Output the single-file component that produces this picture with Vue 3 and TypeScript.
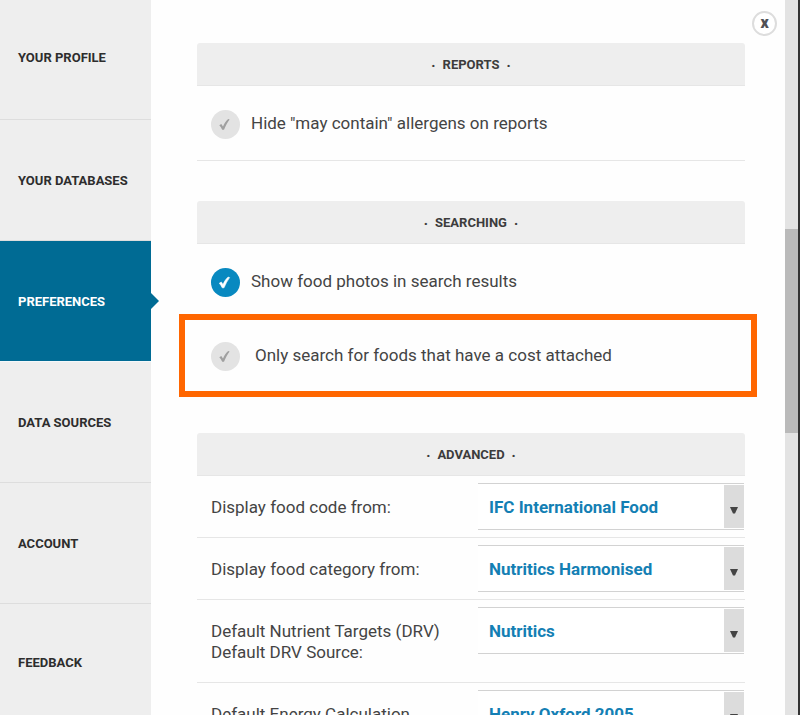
<script setup lang="ts">
import { reactive, ref } from 'vue'

interface ToggleOption {
  id: string
  label: string
  checked: boolean
  highlighted?: boolean
}

interface ToggleSection {
  title: string
  options: ToggleOption[]
}

interface SelectOption {
  id: string
  lines: string[]
  value: string
}

const navItems: string[] = [
  'Your profile',
  'Your databases',
  'Preferences',
  'Data sources',
  'Account',
  'Feedback',
]
const activeItem = ref('Preferences')

const sections = reactive<ToggleSection[]>([
  {
    title: 'Reports',
    options: [
      { id: 'hide-allergens', label: 'Hide "may contain" allergens on reports', checked: false },
    ],
  },
  {
    title: 'Searching',
    options: [
      { id: 'show-photos', label: 'Show food photos in search results', checked: true },
      {
        id: 'only-cost',
        label: 'Only search for foods that have a cost attached',
        checked: false,
        highlighted: true,
      },
    ],
  },
])

const selects = reactive<SelectOption[]>([
  { id: 'food-code', lines: ['Display food code from:'], value: 'IFC International Food' },
  { id: 'food-category', lines: ['Display food category from:'], value: 'Nutritics Harmonised' },
  {
    id: 'drv-source',
    lines: ['Default Nutrient Targets (DRV)', 'Default DRV Source:'],
    value: 'Nutritics',
  },
  { id: 'energy', lines: ['Default Energy Calculation'], value: 'Henry Oxford 2005' },
])
</script>

<template>
  <div class="page">
    <nav class="sidebar">
      <a
        v-for="item in navItems"
        :key="item"
        href="#"
        class="nav-item"
        :class="{ active: item === activeItem }"
        @click.prevent="activeItem = item"
      >{{ item }}</a>
    </nav>

    <main class="content">
      <button class="close" type="button">x</button>

      <section v-for="section in sections" :key="section.title" class="section">
        <h2 class="section-title"><span>·</span>{{ section.title }}<span>·</span></h2>
        <div class="options">
          <label
            v-for="option in section.options"
            :key="option.id"
            class="option"
            :class="{ highlighted: option.highlighted }"
            :for="option.id"
          >
            <span class="tick">
              <input :id="option.id" v-model="option.checked" type="checkbox" />
              <svg viewBox="0 0 29 29" aria-hidden="true">
                <path d="M8.3 15.2 L10.3 14 L12 16.6 C13.3 13.4 15 11 17.2 9 L18.6 9.6 C16.4 12.6 14.6 16 13 19.8 L11.2 19.8 C10.4 18 9.4 16.4 8.3 15.2 Z" />
              </svg>
            </span>
            <span class="option-text">{{ option.label }}</span>
          </label>
        </div>
      </section>

      <section class="section">
        <h2 class="section-title"><span>·</span>Advanced<span>·</span></h2>
        <div v-for="field in selects" :key="field.id" class="field">
          <label class="field-label" :for="field.id">
            <span v-for="line in field.lines" :key="line">{{ line }}</span>
          </label>
          <div class="select-box">
            <select :id="field.id" v-model="field.value">
              <option>{{ field.value }}</option>
            </select>
            <span class="arrow">
              <svg viewBox="0 0 8 8" aria-hidden="true"><path d="M0 1 H8 L5 7.5 H3 Z" /></svg>
            </span>
          </div>
        </div>
      </section>
    </main>

    <div class="scrollbar"><div class="thumb"></div></div>
    <div class="edge"></div>
  </div>
</template>

<style>
body {
  overflow: hidden;
}
</style>

<style scoped>
.page {
  display: grid;
  grid-template-columns: 151px 1fr 13px 2px;
  grid-template-rows: minmax(0, 1fr);
  height: 100vh;
  overflow: hidden;
  background: #fefefe;
  color: #444;
  font-family: Roboto, "Liberation Sans", sans-serif;
}

.sidebar {
  display: flex;
  flex-direction: column;
  background: #eee;
}

.nav-item {
  position: relative;
  display: flex;
  flex: none;
  align-items: center;
  box-sizing: border-box;
  height: 121px;
  padding: 0 18px;
  border-bottom: 1px solid #ddd;
  color: #2d2d2d;
  font-size: 13px;
  font-weight: 700;
  text-decoration: none;
  text-transform: uppercase;
}

.nav-item:first-child {
  height: 120px;
  padding-bottom: 4px;
}

.nav-item:last-child {
  height: 116px;
  border-bottom: 0;
}

.nav-item.active {
  background: #006b94;
  border-bottom-color: #f4f8fa;
  background-clip: padding-box;
  color: #fff;
}

.nav-item.active::after {
  content: "";
  position: absolute;
  top: 52px;
  left: 100%;
  border: 8px solid transparent;
  border-right-width: 0;
  border-left-color: #006b94;
}

.content {
  position: relative;
  min-height: 0;
  padding: 43px 40px 0 46px;
  overflow: hidden;
}

.close {
  position: absolute;
  top: 11px;
  right: 8px;
  width: 25px;
  height: 25px;
  padding: 0 0 1px;
  border: 2px solid #ddd;
  border-radius: 50%;
  background: #fff;
  color: #505055;
  font: 900 16px/18px Roboto, "Liberation Sans", sans-serif;
}

.section {
  margin-bottom: 40px;
}

.section-title {
  display: flex;
  align-items: center;
  justify-content: center;
  gap: 7px;
  box-sizing: border-box;
  height: 43px;
  margin: 0;
  border-bottom: 1px solid #e6e6e6;
  border-radius: 3px 3px 0 0;
  background: #eee;
  color: #3c3c3c;
  font-size: 13px;
  font-weight: 700;
  text-transform: uppercase;
}

.section-title span {
  padding-top: 3px;
  font-weight: 900;
}

.options {
  border-bottom: 1px solid #e6e6e6;
}

.option {
  position: relative;
  display: flex;
  align-items: flex-start;
  gap: 11px;
  box-sizing: border-box;
  height: 74px;
  padding: 24px 14px 0;
  font-size: 17px;
}

.option.highlighted {
  gap: 15px;
}

.option.highlighted::after {
  content: "";
  position: absolute;
  inset: -4px -12px -5px -18px;
  border: 6px solid #ff6600;
  pointer-events: none;
}

.tick {
  display: grid;
  flex: none;
  width: 29px;
  height: 29px;
}

.tick input,
.tick svg {
  grid-area: 1 / 1;
  width: 29px;
  height: 29px;
}

.tick input {
  appearance: none;
  margin: 0;
  border-radius: 50%;
  background: #e3e3e3;
}

.tick input:checked {
  background: #0889c0;
}

.tick svg {
  fill: #a0a0a0;
  pointer-events: none;
}

.tick input:checked + svg {
  fill: #fff;
  stroke: #fff;
  stroke-width: 0.6;
}

.option-text {
  line-height: 27px;
}

.field {
  display: grid;
  grid-template-columns: 1fr 266px;
  padding-right: 1px;
  border-bottom: 1px solid #e6e6e6;
}

.field-label {
  display: flex;
  flex-direction: column;
  padding: 21px 14px 19px;
  font-size: 17px;
  line-height: 21px;
}

.select-box {
  display: grid;
  grid-template-columns: 1fr 20px;
  align-self: start;
  height: 47px;
  margin-top: 7px;
}

.select-box select {
  grid-area: 1 / 1 / 2 / 3;
  appearance: none;
  box-sizing: border-box;
  width: 100%;
  height: 47px;
  padding: 1px 30px 0 11px;
  border: 0 solid #d2d2d2;
  border-width: 1px 0;
  border-radius: 0;
  background: #fff;
  color: #147fb4;
  font: 700 17px Roboto, "Liberation Sans", sans-serif;
}

.arrow {
  display: flex;
  grid-area: 1 / 2;
  align-items: center;
  justify-content: center;
  margin: 2px 0;
  padding-top: 6px;
  background: #dcdcdc;
  pointer-events: none;
}

.arrow svg {
  width: 8px;
  height: 8px;
  fill: #444;
}

.scrollbar {
  display: grid;
  grid-template-rows: 229fr 204fr 282fr;
  background: #e3e3e3;
}

.thumb {
  grid-row: 2;
  background: #bababa;
}

.edge {
  background: #333;
}
</style>
